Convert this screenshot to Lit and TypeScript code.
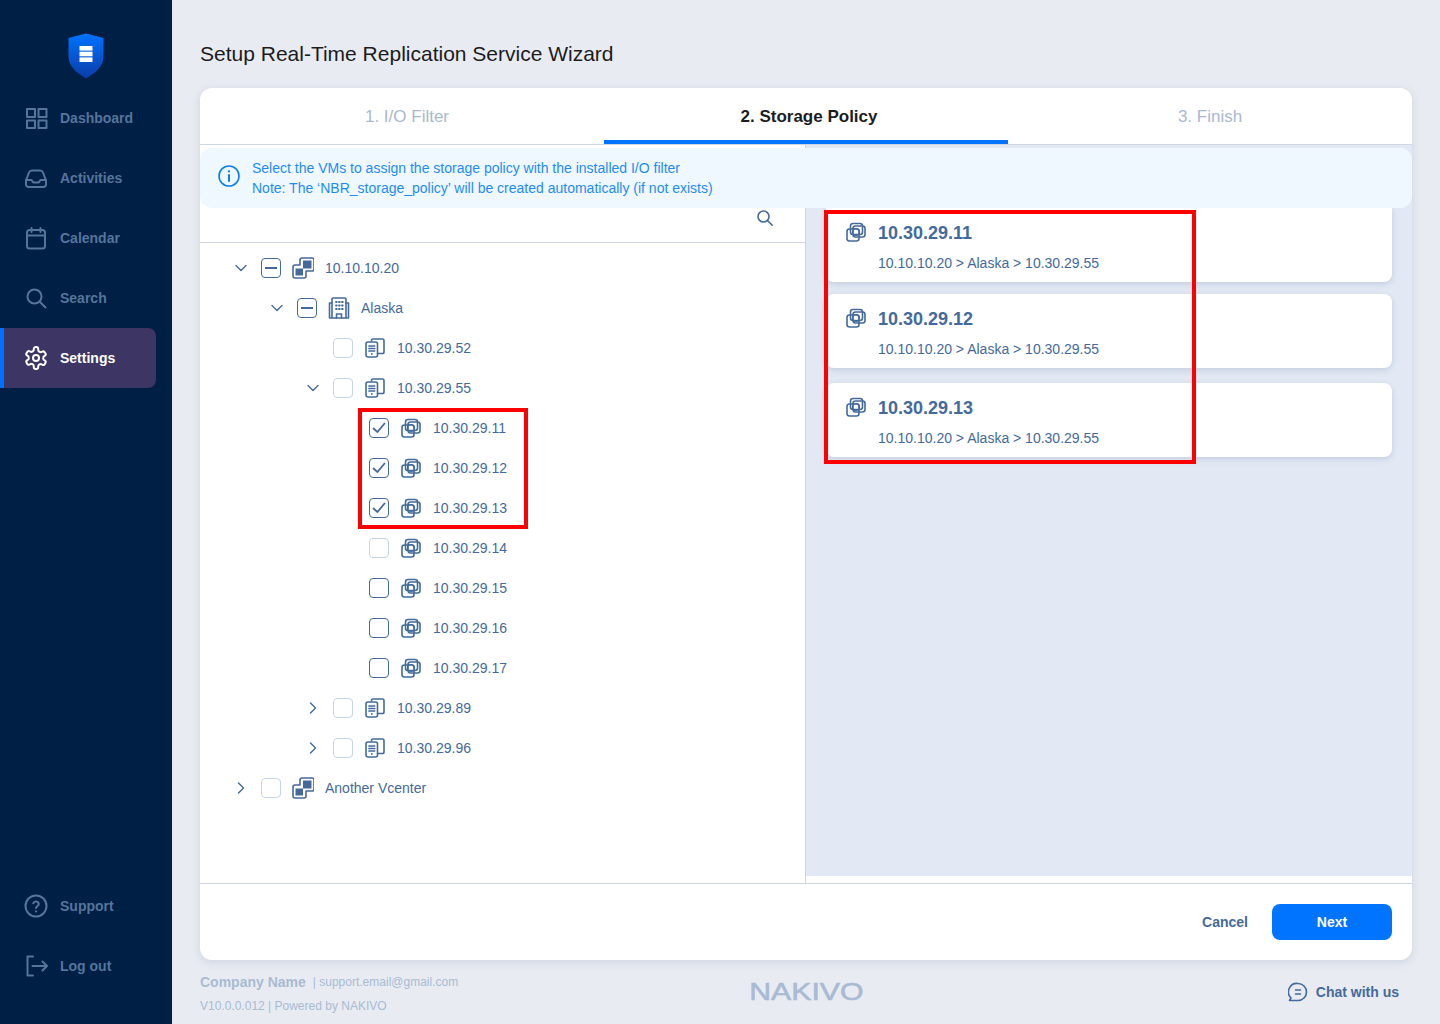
import { LitElement, html, css, svg } from "lit";
import { customElement } from "lit/decorators.js";

const S = (w: number, content: unknown, extra = "") => html`<svg class=${"ic " + extra} width=${w} height=${w} viewBox="0 0 ${w} ${w}" fill="none" stroke="currentColor" stroke-width="1.6" stroke-linecap="round" stroke-linejoin="round">${content}</svg>`;
const N = (content: unknown) => html`<svg class="ic" width="24" height="24" viewBox="0 0 24 24" fill="none" stroke="currentColor" stroke-width="2" stroke-linecap="round" stroke-linejoin="round">${content}</svg>`;

const icons: Record<string, unknown> = {
  dashboard: N(svg`<rect x="3" y="3" width="8" height="8"/><rect x="14.500" y="3" width="8" height="8"/><rect x="3" y="14.500" width="8" height="7.500"/><rect x="14.500" y="14.500" width="8" height="7.500"/>`),
  inbox: N(svg`<path d="M2 14.500 5 6.500a3 3 0 0 1 2.800-2h8.400a3 3 0 0 1 2.800 2l3 8v4a2.500 2.500 0 0 1-2.500 2.500H4.500A2.500 2.500 0 0 1 2 18.500z"/><path d="M2 14h5.500l1.800 2.500h5.400L16.500 14H22"/>`),
  calendar: N(svg`<rect x="3" y="4" width="18" height="18.500" rx="2.500"/><path d="M3 9.500h18M7.500 2v4M16.500 2v4"/>`),
  search: N(svg`<circle cx="10.500" cy="10.500" r="7"/><path d="m16 16 5.500 5.500"/>`),
  gear: N(svg`<path d="M12.220 1h-.440a2 2 0 0 0-2 2v.6a2 2 0 0 1-1 1.730l-.430.250a2 2 0 0 1-2 0l-.5-.2a2 2 0 0 0-2.730.730l-.5.800a2 2 0 0 0 .730 2.730l.4.300a2 2 0 0 1 1 1.720v.510a2 2 0 0 1-1 1.740l-.4.200a2 2 0 0 0-.730 2.730l.5.800a2 2 0 0 0 2.730.730l.5-.2a2 2 0 0 1 2 0l.430.250a2 2 0 0 1 1 1.730V21a2 2 0 0 0 2 2h.440a2 2 0 0 0 2-2v-.6a2 2 0 0 1 1-1.730l.430-.250a2 2 0 0 1 2 0l.5.200a2 2 0 0 0 2.730-.730l.5-.8a2 2 0 0 0-.730-2.730l-.4-.2a2 2 0 0 1-1-1.740v-.5a2 2 0 0 1 1-1.740l.4-.2a2 2 0 0 0 .730-2.730l-.5-.8a2 2 0 0 0-2.730-.730l-.5.200a2 2 0 0 1-2 0l-.430-.250a2 2 0 0 1-1-1.730V3a2 2 0 0 0-2-2z"/><circle cx="12" cy="12" r="3"/>`),
  support: N(svg`<circle cx="12" cy="12" r="10.500"/><path d="M9.200 9.300a2.900 2.900 0 0 1 5.600.8c0 1.900-2.800 2.400-2.800 4"/><path d="M12 17.300v.1"/>`),
  logout: N(svg`<path d="M9 2.500H3.500v19H9"/><path d="M8.500 12h14.500M18.500 7.500 23 12l-4.500 4.500"/>`),
  info: S(24, svg`<circle cx="12" cy="12" r="10"/><path d="M12 11v6" stroke-width="2"/><path d="M12 7.300v.1" stroke-width="2.200"/>`),
  find: S(18, svg`<circle cx="7.500" cy="7.500" r="5.500"/><path d="m11.700 11.700 4.500 4.500"/>`),
  chat: S(20, svg`<path d="M10 1.500a8.500 8.500 0 0 1 0 17H1.500l1.500-2.500A8.500 8.500 0 0 1 10 1.500z"/><path d="M7.500 8h5M7.500 12h5"/>`),
  down: S(12, svg`<path d="m1 3.500 5 5 5-5" stroke-width="1.400"/>`),
  right: S(12, svg`<path d="m3.500 1 5 5-5 5" stroke-width="1.400"/>`),
  vm: S(20, svg`<rect x="1" y="7" width="12" height="12" rx="2.500"/><rect x="4.500" y="1.500" width="12" height="11" rx="2.500"/><rect x="7" y="4" width="12" height="11" rx="2.500"/><circle cx="10" cy="10" r="3.500" stroke-width="1.200"/>`),
  vcenter: S(22, svg`<path d="M8 8V3a2 2 0 0 1 2-2h10a2 2 0 0 1 2 2v9a2 2 0 0 1-2 2h-6v5a2 2 0 0 1-2 2H3a2 2 0 0 1-2-2v-9a2 2 0 0 1 2-2z"/><rect x="11" y="3.500" width="8.500" height="8" fill="currentColor" stroke="none"/><rect x="3.500" y="11.500" width="7.500" height="7" fill="currentColor" stroke="none"/>`),
  dc: S(22, svg`<rect x="4" y="1" width="14" height="20" rx="1"/><path d="M4 6H1.500v15H4M18 6h2.500v15H18"/><path d="M8.500 21v-4h5v4"/><path d="M8 5h.8M11 5h.8M14 5h.8M8 8.500h.8M11 8.500h.8M14 8.500h.8M8 12h.8M11 12h.8M14 12h.8" stroke-width="1.800"/>`),
  host: S(20, svg`<path d="M6.500 3V2.500a1.500 1.500 0 0 1 1.500-1.500h9.500A1.500 1.500 0 0 1 19 2.500V14a1.500 1.500 0 0 1-1.500 1.500H13"/><rect x="1" y="4" width="11.500" height="15" rx="2"/><path d="M3.800 8h6M3.800 10.500h6M3.800 13h6" stroke-width="1.400"/><path d="M6.800 16v.1" stroke-width="1.800"/>`),
  check: html`<svg width="14" height="12" viewBox="0 0 14 12" fill="none" stroke="currentColor" stroke-width="1.800" stroke-linecap="round" stroke-linejoin="round"><path d="M1.500 6.500 5.500 10l7-8.500"/></svg>`,
};

const shield = html`<svg width="38" height="46" viewBox="0 0 38 46"><defs><linearGradient id="sg" x1="0" y1="0" x2="0" y2="1"><stop offset="0" stop-color="#0074ff"/><stop offset="1" stop-color="#0b3ba8"/></linearGradient></defs><path d="M19 .500 36.500 5v19c0 9-8 16-17.500 21.500C9.500 40 1.500 33 1.500 24V5z" fill="url(#sg)"/><rect x="12.500" y="13" width="13" height="4.600" fill="#fff"/><rect x="12.500" y="18.700" width="13" height="4.600" fill="#fff"/><rect x="12.500" y="24.400" width="13" height="4.600" fill="#fff"/></svg>`;

type Row = { level: number; chev?: "down" | "right"; box: "minus" | "on" | "light" | "off"; icon: string; text: string };
const rows: Row[] = [
  { level: 0, chev: "down", box: "minus", icon: "vcenter", text: "10.10.10.20" },
  { level: 1, chev: "down", box: "minus", icon: "dc", text: "Alaska" },
  { level: 2, box: "light", icon: "host", text: "10.30.29.52" },
  { level: 2, chev: "down", box: "light", icon: "host", text: "10.30.29.55" },
  { level: 3, box: "on", icon: "vm", text: "10.30.29.11" },
  { level: 3, box: "on", icon: "vm", text: "10.30.29.12" },
  { level: 3, box: "on", icon: "vm", text: "10.30.29.13" },
  { level: 3, box: "light", icon: "vm", text: "10.30.29.14" },
  { level: 3, box: "off", icon: "vm", text: "10.30.29.15" },
  { level: 3, box: "off", icon: "vm", text: "10.30.29.16" },
  { level: 3, box: "off", icon: "vm", text: "10.30.29.17" },
  { level: 2, chev: "right", box: "light", icon: "host", text: "10.30.29.89" },
  { level: 2, chev: "right", box: "light", icon: "host", text: "10.30.29.96" },
  { level: 0, chev: "right", box: "light", icon: "vcenter", text: "Another Vcenter" },
];

const nav = [
  ["dashboard", "Dashboard"],
  ["inbox", "Activities"],
  ["calendar", "Calendar"],
  ["search", "Search"],
  ["gear", "Settings"],
];

@customElement("app-root")
export class AppRoot extends LitElement {
  static styles = css`
    :host { display: block; width: 1440px; height: 1024px; overflow: hidden; font-family: "Liberation Sans", Arial, sans-serif; color: #446a9b; }
    * { box-sizing: border-box; }
    .ic { flex: none; display: block; }
    .page { display: flex; height: 1024px; background: #e8ebf1; }
    .side { width: 172px; flex: none; background: #001f45; display: flex; flex-direction: column; }
    .logo { display: flex; justify-content: center; padding-top: 33px; height: 88px; }
    .nav { display: flex; align-items: center; gap: 12px; height: 60px; width: 156px; padding-left: 24px; color: #55759b; font-size: 14px; font-weight: 700; }
    .nav.active { background: #3d3664; color: #fff; border-left: 4px solid #0070ff; padding-left: 20px; border-radius: 0 8px 8px 0; }
    .spacer { flex: 1; }
    .side-bottom { padding-bottom: 28px; }
    .main { flex: 1; padding-left: 28px; padding-right: 28px; display: flex; flex-direction: column; }
    h1 { margin: 0; padding-top: 40px; height: 88px; font-size: 21px; line-height: 28px; font-weight: 400; color: #1c1c1e; }
    .card { height: 872px; background: #fff; border-radius: 12px; box-shadow: 0 2px 8px rgba(70, 95, 140, .16); display: flex; flex-direction: column; overflow: hidden; }
    .tabs { display: grid; grid-template-columns: repeat(3, 1fr); height: 57px; border-bottom: 1px solid #cdd6e2; flex: none; }
    .tab { display: flex; justify-content: center; padding-top: 19px; font-size: 17px; line-height: 20px; color: #a9b9ce; }
    .tab.first { padding-left: 10px; }
    .tab.active { color: #1b1d21; font-weight: 700; border-bottom: 4px solid #0073ff; height: 56px; padding-left: 6px; }
    .body { position: relative; display: flex; height: 738px; flex: none; }
    .banner { position: absolute; left: 0; right: 0; top: 3px; height: 60px; background: #f0f8ff; border-radius: 12px; display: flex; align-items: center; gap: 11px; padding-left: 17px; color: #1f8cf5; font-size: 14px; line-height: 20px; z-index: 1; }
    .banner .ic { color: #0b80f5; margin-top: -4px; }
    .left { position: relative; width: 606px; flex: none; border-right: 1px solid #cdd6e2; }
    .searchrow { height: 98px; border-bottom: 1px solid #cdd6e2; display: flex; justify-content: flex-end; align-items: flex-end; padding: 0 31px 15px 0; }
    .tree { padding-top: 5px; }
    .row { display: flex; align-items: center; height: 40px; font-size: 14px; }
    .chev { width: 20px; flex: none; margin-right: 10px; display: flex; justify-content: center; }
    .box { width: 20px; height: 20px; flex: none; border-radius: 4px; border: 1.500px solid #446a9b; display: flex; align-items: center; justify-content: center; margin-right: 12px; }
    .box.light { border-color: #c6d5e9; }
    .minus { width: 12px; height: 2px; background: #446a9b; }
    .slot { width: 20px; flex: none; display: flex; justify-content: center; margin-right: 12px; }
    .right { flex: 1; background: #fff; }
    .panel { height: 731px; background: #e2e9f4; padding: 63px 20px 0; display: flex; flex-direction: column; gap: 12px; position: relative; }
    .vm { height: 74px; background: #fff; border-radius: 8px; box-shadow: 0 2px 6px rgba(70, 95, 140, .2); padding: 14px 0 0 20px; display: flex; gap: 12px; flex: none; }
    .vm:first-child { border-radius: 0 0 8px 8px; }
    .vm:nth-child(3) { margin-top: 3px; }
    .vm-title { font-size: 18px; line-height: 22px; font-weight: 700; }
    .vm-sub { margin-top: 8px; font-size: 14px; line-height: 22px; }
    .mark { position: absolute; border: 4px solid #f00; pointer-events: none; z-index: 2; }
    .mark.a { left: 158px; top: 263px; width: 170px; height: 121px; }
    .mark.b { left: 18px; top: 65px; width: 372px; height: 254px; }
    .foot { flex: 1; border-top: 1px solid #cdd6e2; display: flex; justify-content: flex-end; align-items: center; padding: 0 20px 0 0; gap: 24px; font-size: 14px; font-weight: 700; }
    .next { width: 120px; height: 36px; background: #0073ff; color: #fff; border-radius: 8px; display: flex; align-items: center; justify-content: center; }
    .bottom { flex: 1; display: grid; grid-template-columns: 1fr auto 1fr; color: #a9bbd3; font-size: 12px; }
    .info { padding-top: 14px; }
    .l1 { display: flex; align-items: center; gap: 7px; line-height: 16px; }
    .l1 b { font-size: 14px; }
    .l2 { margin-top: 8px; line-height: 16px; }
    .brand { font-size: 24px; line-height: 24px; padding-top: 20px; font-weight: 400; transform: scaleX(1.26); -webkit-text-stroke: .6px #a9bbd3; }
    .chat { display: flex; justify-content: flex-end; align-items: center; gap: 8px; padding: 0 13px 0 0; height: 64px; color: #446a9b; font-size: 14px; font-weight: 700; }
  `;

  private navItem(icon: string, label: string, active = false) {
    return html`<div class="nav ${active ? "active" : ""}">${icons[icon]}<span>${label}</span></div>`;
  }

  private treeRow(r: Row) {
    return html`<div class="row" style="padding-left:${31 + r.level * 36}px">
      <span class="chev">${r.chev ? icons[r.chev] : ""}</span>
      <span class="box ${r.box === "light" ? "light" : ""}">${r.box === "minus" ? html`<span class="minus"></span>` : r.box === "on" ? icons.check : ""}</span>
      <span class="slot">${icons[r.icon]}</span>
      <span>${r.text}</span>
    </div>`;
  }

  render() {
    const picked = ["10.30.29.11", "10.30.29.12", "10.30.29.13"];
    return html`<div class="page">
      <aside class="side">
        <div class="logo">${shield}</div>
        ${nav.map(([i, l]) => this.navItem(i, l, l === "Settings"))}
        <div class="spacer"></div>
        <div class="side-bottom">${this.navItem("support", "Support")}${this.navItem("logout", "Log out")}</div>
      </aside>
      <main class="main">
        <h1>Setup Real-Time Replication Service Wizard</h1>
        <section class="card">
          <div class="tabs">
            <div class="tab first">1. I/O Filter</div>
            <div class="tab active">2. Storage Policy</div>
            <div class="tab">3. Finish</div>
          </div>
          <div class="body">
            <div class="banner">${icons.info}<div>Select the VMs to assign the storage policy with the installed I/O filter<br />Note: The ‘NBR_storage_policy’ will be created automatically (if not exists)</div></div>
            <div class="left">
              <div class="searchrow">${icons.find}</div>
              <div class="tree">${rows.map((r) => this.treeRow(r))}</div>
              <div class="mark a"></div>
            </div>
            <div class="right">
              <div class="panel">
                ${picked.map((p) => html`<div class="vm">${icons.vm}<div><div class="vm-title">${p}</div><div class="vm-sub">10.10.10.20 &gt; Alaska &gt; 10.30.29.55</div></div></div>`)}
                <div class="mark b"></div>
              </div>
            </div>
          </div>
          <div class="foot"><span>Cancel</span><span class="next">Next</span></div>
        </section>
        <footer class="bottom">
          <div class="info">
            <div class="l1"><b>Company Name</b><span>| support.email@gmail.com</span></div>
            <div class="l2">V10.0.0.012 | Powered by NAKIVO</div>
          </div>
          <div class="brand">NAKIVO</div>
          <div class="chat">${icons.chat}<span>Chat with us</span></div>
        </footer>
      </main>
    </div>`;
  }
}
